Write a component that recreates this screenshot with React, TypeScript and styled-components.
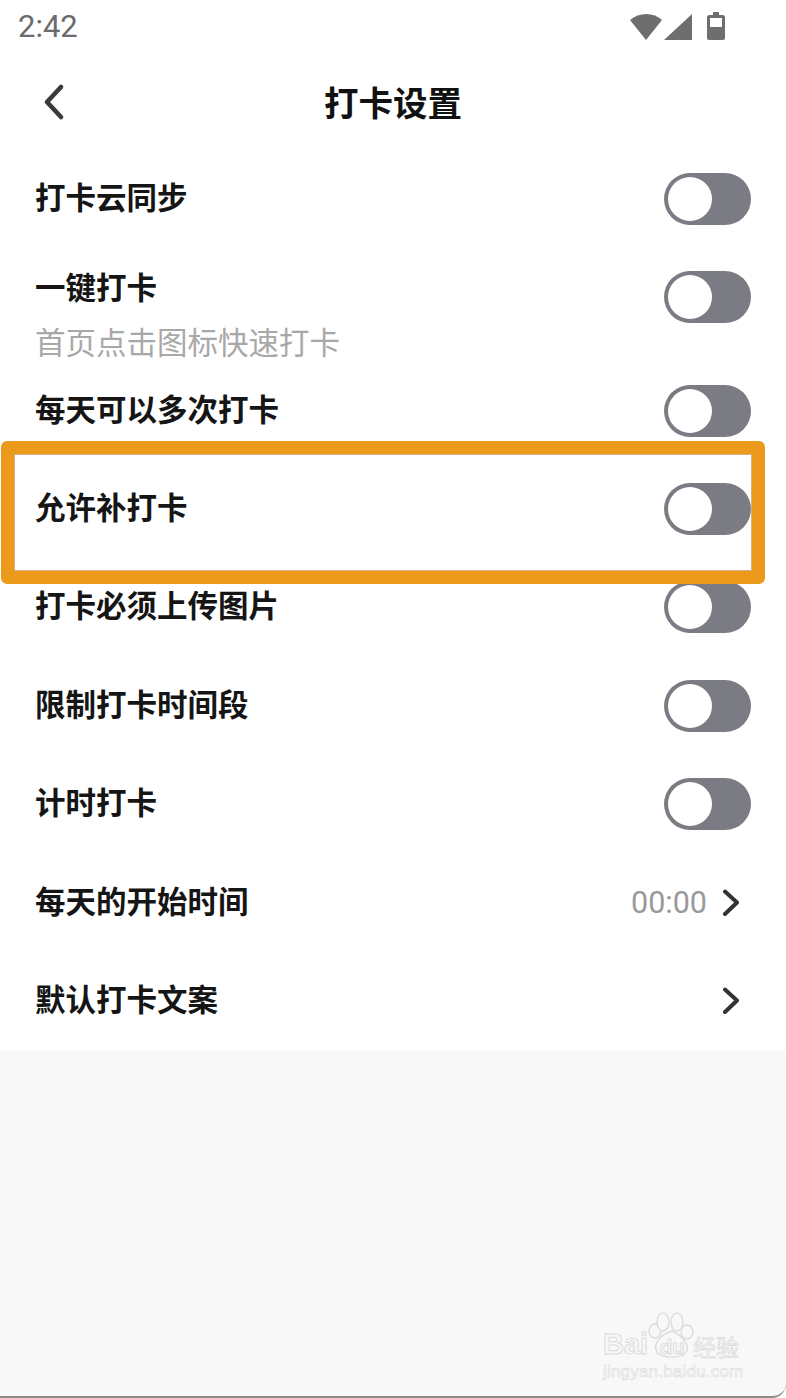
import React from 'react';
import styled, { createGlobalStyle } from 'styled-components';

const GlobalStyle = createGlobalStyle`
  html, body {
    margin: 0;
    padding: 0;
    background: #fff;
  }
  * {
    box-sizing: border-box;
  }
`;

const Page = styled.div`
  position: relative;
  width: 786px;
  height: 1398px;
  overflow: hidden;
  display: flex;
  flex-direction: column;
  background: #fff;
  font-family: 'Noto Sans CJK SC', 'Noto Sans', sans-serif;
`;

const StatusBar = styled.div`
  height: 54px;
  padding: 0 60px 0 18px;
  display: flex;
  align-items: center;
  justify-content: space-between;
`;

const Clock = styled.span`
  font-family: Roboto, sans-serif;
  font-size: 31px;
  line-height: 56px;
  color: #6b6b6b;
`;

const StatusIcons = styled.svg`
  display: block;
`;

const TopBar = styled.div`
  position: relative;
  height: 96px;
  display: flex;
  align-items: center;
  justify-content: center;
`;

const BackButton = styled.div`
  position: absolute;
  left: 41px;
  top: 29px;
  display: flex;
`;

const Title = styled.h1`
  margin: 0 0 2px;
  font-size: 34.5px;
  line-height: 94px;
  font-weight: 700;
  color: #111;
`;

const List = styled.div`
  display: flex;
  flex-direction: column;
`;

const Row = styled.div<{ $tall?: boolean }>`
  height: ${(p) => (p.$tall ? '113px' : '98.4px')};
  padding: ${(p) => (p.$tall ? '23px' : '0')} 35px 0 35px;
  display: flex;
  align-items: ${(p) => (p.$tall ? 'flex-start' : 'center')};
  justify-content: space-between;
`;

const RowText = styled.div`
  display: flex;
  flex-direction: column;
  margin-top: -3px;
  padding-bottom: 3px;
`;

const Label = styled.span`
  font-size: 30.5px;
  line-height: 36px;
  font-weight: 700;
  color: #151515;
`;

const Hint = styled.span`
  margin-top: 19px;
  font-size: 30.5px;
  line-height: 36px;
  color: #a8a8a8;
`;

const Toggle = styled.div`
  width: 87px;
  height: 52px;
  padding: 4px 0 4px 4px;
  border-radius: 26px;
  background: #7b7b83;
  display: flex;
`;

const Thumb = styled.div`
  width: 44px;
  height: 44px;
  border-radius: 50%;
  background: #fff;
`;

const RowValue = styled.div`
  display: flex;
  align-items: center;
  gap: 15px;
  margin-right: 11px;
`;

const Value = styled.span`
  font-family: Roboto, sans-serif;
  font-size: 30.5px;
  color: #999;
`;

const Chevron = styled.svg`
  display: block;
`;

const Footer = styled.div`
  flex: 1;
  background: #f8f8f8;
  border-bottom: 2px solid #8a8a8a;
  border-bottom-right-radius: 14px;
`;

const Highlight = styled.div`
  position: absolute;
  left: 1px;
  top: 441px;
  width: 764px;
  height: 143px;
  border: 13px solid #ec9a1c;
  border-radius: 6px;
  box-shadow: inset 0 0 0 1px rgba(190, 110, 30, 0.55);
  pointer-events: none;
`;

const Watermark = styled.div`
  position: absolute;
  left: 602px;
  top: 1312px;
  width: 145px;
  height: 72px;
`;

const Paw = styled.svg`
  position: absolute;
  left: 0;
  top: 0;
`;

const MarkText = styled.span`
  position: absolute;
  font-family: 'Liberation Sans', Arial, sans-serif;
  color: #f8f8f8;
  -webkit-text-stroke: 1px #dcdcdc;
  white-space: nowrap;
`;

const BaiLabel = styled(MarkText)`
  left: 1px;
  top: 16px;
  font-size: 29px;
  font-weight: 700;
`;

const DuLabel = styled(MarkText)`
  left: 58px;
  top: 24px;
  font-size: 20px;
  font-weight: 700;
`;

const JingLabel = styled(MarkText)`
  left: 91px;
  top: 20px;
  font-family: 'Noto Sans CJK SC', sans-serif;
  font-size: 23px;
  line-height: 28px;
  -webkit-text-stroke: 0.8px #dcdcdc;
`;

const Url = styled(MarkText)`
  left: 1px;
  top: 50px;
  font-size: 17px;
  letter-spacing: 0.2px;
  -webkit-text-stroke: 0.6px #dcdcdc;
`;

const RightArrow: React.FC = () => (
  <Chevron width="18" height="28" viewBox="0 0 18 28" fill="none">
    <path
      d="M3 2.5 L15 13.5 L3 25"
      stroke="#333"
      strokeWidth="4"
      strokeLinecap="round"
      strokeLinejoin="round"
    />
  </Chevron>
);

const settings = [
  { label: '打卡云同步' },
  { label: '一键打卡', hint: '首页点击图标快速打卡' },
  { label: '每天可以多次打卡' },
  { label: '允许补打卡' },
  { label: '打卡必须上传图片' },
  { label: '限制打卡时间段' },
  { label: '计时打卡' },
];

const App: React.FC = () => {
  return (
    <Page>
      <GlobalStyle />
      <StatusBar>
        <Clock>2:42</Clock>
        <StatusIcons width="96" height="30" viewBox="0 0 96 30">
          <path d="M0 8 C9 0 24 0 32 8 L16 28 Z" fill="#6e6e6e" />
          <path d="M34 28 L62 2 V28 Z" fill="#6e6e6e" />
          <path
            d="M79 3 H83 V0 H89 V3 H93 C94 3 95 4 95 5 V26 C95 27 94 28 93 28 H79 C78 28 77 27 77 26 V5 C77 4 78 3 79 3 Z"
            fill="#6e6e6e"
          />
          <rect x="80" y="6" width="12" height="9" fill="#fff" />
        </StatusIcons>
      </StatusBar>
      <TopBar>
        <BackButton>
          <svg width="26" height="38" viewBox="0 0 26 38" fill="none">
            <path
              d="M20 4 L6 19 L20 34"
              stroke="#3a3a3a"
              strokeWidth="4.6"
              strokeLinecap="round"
              strokeLinejoin="round"
            />
          </svg>
        </BackButton>
        <Title>打卡设置</Title>
      </TopBar>
      <List>
        {settings.map((item) => (
          <Row key={item.label} $tall={!!item.hint}>
            <RowText>
              <Label>{item.label}</Label>
              {item.hint && <Hint>{item.hint}</Hint>}
            </RowText>
            <Toggle>
              <Thumb />
            </Toggle>
          </Row>
        ))}
        <Row>
          <RowText>
            <Label>每天的开始时间</Label>
          </RowText>
          <RowValue>
            <Value>00:00</Value>
            <RightArrow />
          </RowValue>
        </Row>
        <Row>
          <RowText>
            <Label>默认打卡文案</Label>
          </RowText>
          <RowValue>
            <RightArrow />
          </RowValue>
        </Row>
      </List>
      <Footer />
      <Highlight />
      <Watermark>
        <BaiLabel>Bai</BaiLabel>
        <Paw width="145" height="50" viewBox="0 0 145 50" fill="#f8f8f8" stroke="#dcdcdc" strokeWidth="1.4">
          <ellipse cx="53" cy="19" rx="6" ry="7" />
          <ellipse cx="61" cy="10" rx="6" ry="9" />
          <ellipse cx="75" cy="10" rx="6" ry="9" />
          <ellipse cx="85" cy="20" rx="6" ry="7" />
          <path d="M70 19 C80 23 87 32 85 39 C81 47 60 47 55 40 C50 31 60 22 70 19 Z" />
        </Paw>
        <DuLabel>du</DuLabel>
        <JingLabel>经验</JingLabel>
        <Url>jingyan.baidu.com</Url>
      </Watermark>
    </Page>
  );
};

export default App;
